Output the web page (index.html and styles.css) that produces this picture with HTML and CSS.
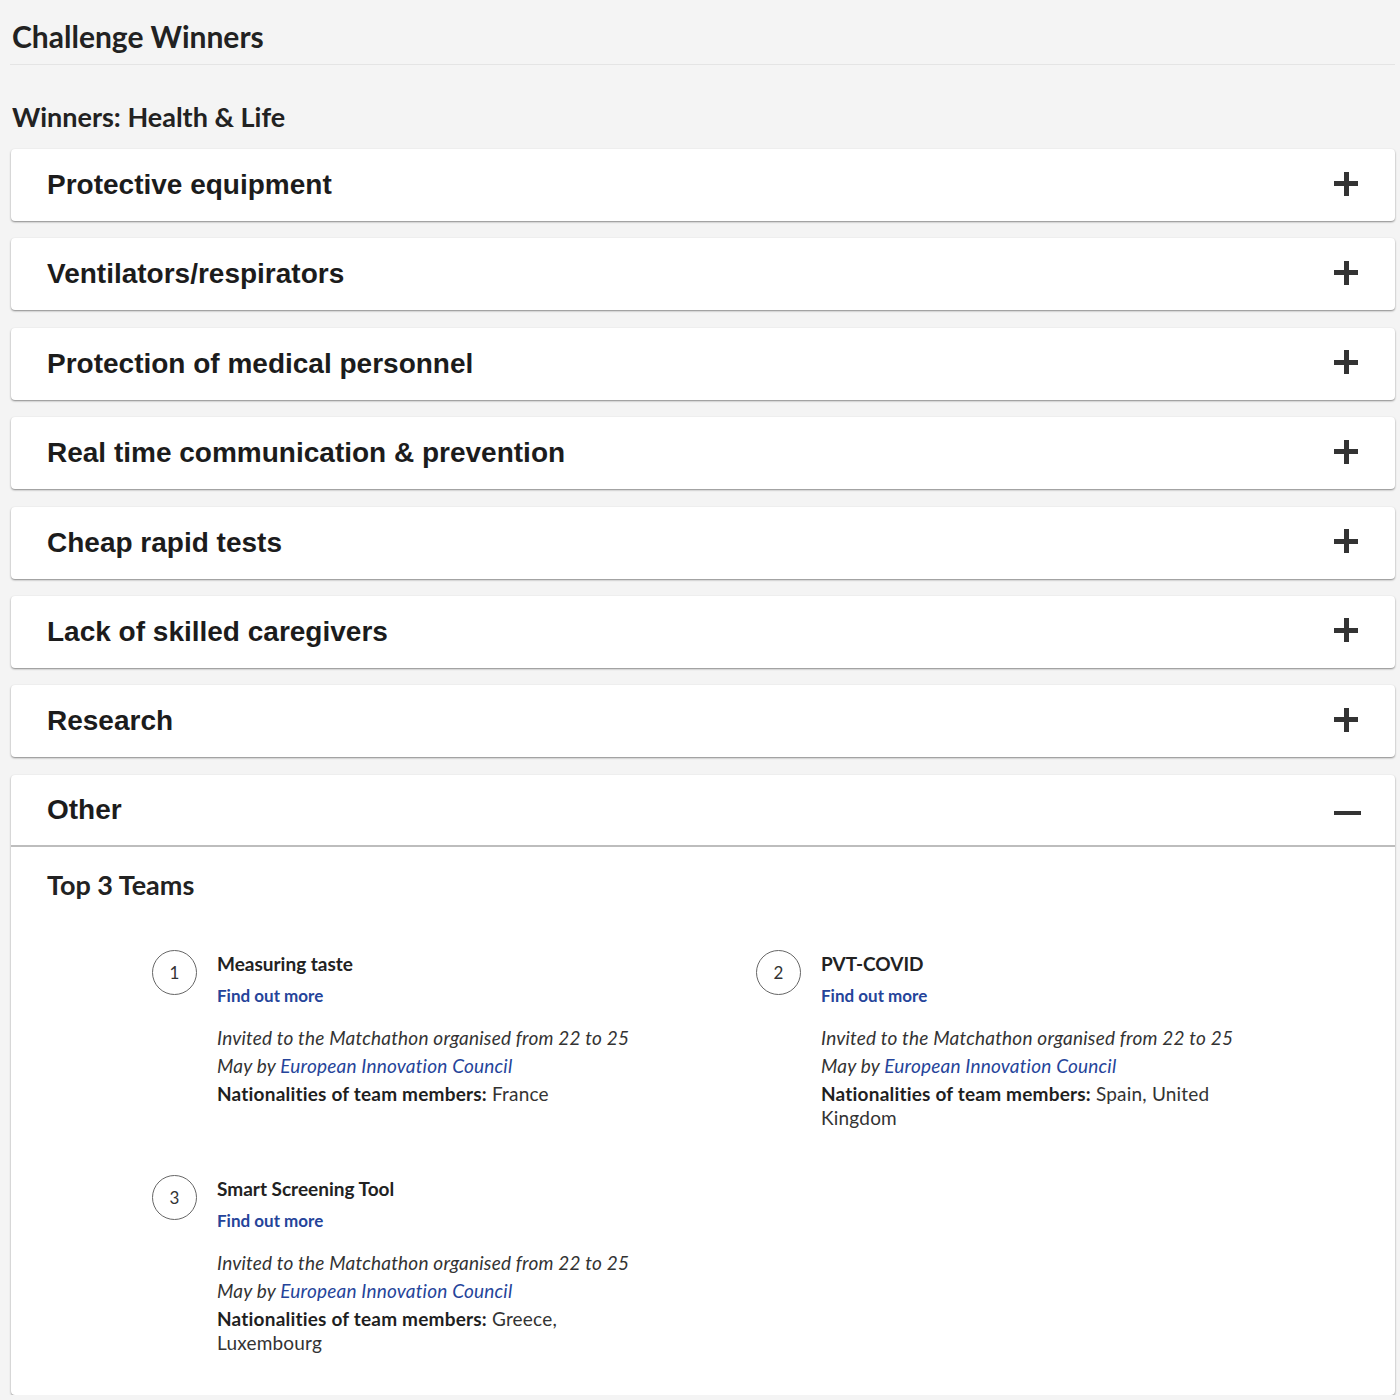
FILE: index.html
```html
<!DOCTYPE html>
<html lang="en">
<head>
<meta charset="utf-8">
<title>Challenge Winners</title>
<link rel="stylesheet" href="styles.css">
</head>
<body>
<div class="page">
  <h1 class="page-title">Challenge Winners</h1>
  <div class="rule"></div>
  <h2 class="section-title">Winners: Health &amp; Life</h2>

  <div class="accordion">
    <div class="acc-item">
      <div class="acc-head"><span class="acc-title">Protective equipment</span><span class="icon plus"></span></div>
    </div>
    <div class="acc-item">
      <div class="acc-head"><span class="acc-title">Ventilators/respirators</span><span class="icon plus"></span></div>
    </div>
    <div class="acc-item">
      <div class="acc-head"><span class="acc-title">Protection of medical personnel</span><span class="icon plus"></span></div>
    </div>
    <div class="acc-item">
      <div class="acc-head"><span class="acc-title">Real time communication &amp; prevention</span><span class="icon plus"></span></div>
    </div>
    <div class="acc-item">
      <div class="acc-head"><span class="acc-title">Cheap rapid tests</span><span class="icon plus"></span></div>
    </div>
    <div class="acc-item">
      <div class="acc-head"><span class="acc-title">Lack of skilled caregivers</span><span class="icon plus"></span></div>
    </div>
    <div class="acc-item">
      <div class="acc-head"><span class="acc-title">Research</span><span class="icon plus"></span></div>
    </div>
    <div class="acc-item open">
      <div class="acc-head"><span class="acc-title">Other</span><span class="icon minus"></span></div>
      <div class="acc-body">
        <h3 class="teams-title">Top 3 Teams</h3>
        <div class="teams">
          <div class="team">
            <div class="rank">1</div>
            <div class="team-info">
              <div class="team-name">Measuring taste</div>
              <a class="more" href="#">Find out more</a>
              <p class="invite">Invited to the Matchathon organised from 22 to 25 May by <a href="#">European Innovation Council</a></p>
              <p class="nat"><b>Nationalities of team members:</b> France</p>
            </div>
          </div>
          <div class="team">
            <div class="rank">2</div>
            <div class="team-info">
              <div class="team-name">PVT-COVID</div>
              <a class="more" href="#">Find out more</a>
              <p class="invite">Invited to the Matchathon organised from 22 to 25 May by <a href="#">European Innovation Council</a></p>
              <p class="nat"><b>Nationalities of team members:</b> Spain, United Kingdom</p>
            </div>
          </div>
          <div class="team">
            <div class="rank">3</div>
            <div class="team-info">
              <div class="team-name">Smart Screening Tool</div>
              <a class="more" href="#">Find out more</a>
              <p class="invite">Invited to the Matchathon organised from 22 to 25 May by <a href="#">European Innovation Council</a></p>
              <p class="nat"><b>Nationalities of team members:</b> Greece, Luxembourg</p>
            </div>
          </div>
        </div>
      </div>
    </div>
  </div>
</div>
</body>
</html>
```

FILE: styles.css
```css
* { box-sizing: border-box; }

body {
  margin: 0;
  background: #f4f4f4;
  color: #222;
  font-family: Lato, "Open Sans", sans-serif;
}

.page {
  padding: 0 5px 0 11px;
}

.page-title {
  margin: 0;
  padding: 18px 0 0 1px;
  font-size: 30px;
  line-height: 36px;
  font-weight: 700;
  color: #222;
}

.rule {
  margin: 10px 0 0 -1px;
  height: 1px;
  background: #e4e4e4;
}

.section-title {
  margin: 0;
  padding: 37px 0 0 1px;
  font-size: 27px;
  line-height: 30px;
  font-weight: 700;
  color: #222;
}

.accordion {
  margin-top: 17px;
  display: flex;
  flex-direction: column;
  gap: 17.4px;
}

.acc-item {
  background: #fff;
  border-radius: 4px;
  box-shadow: 0 1px 2px rgba(0, 0, 0, 0.45);
}

.acc-head {
  height: 72px;
  padding: 0 36px 0 36px;
  display: flex;
  align-items: center;
  justify-content: space-between;
}

.open .acc-head {
  border-bottom: 2px solid #bdbdbd;
}

.acc-title {
  font-family: "Liberation Sans", Arial, sans-serif;
  font-weight: 700;
  font-size: 28px;
  color: #1c1c1c;
}

.icon {
  position: relative;
  width: 24px;
  height: 24px;
  margin-right: 1px;
  margin-top: -3px;
}

.icon::before,
.icon::after {
  content: "";
  position: absolute;
  background: #333;
}

.icon::before {
  left: 0;
  top: 9.5px;
  width: 24px;
  height: 5px;
}

.plus::after {
  left: 9.5px;
  top: 0;
  width: 5px;
  height: 24px;
}

.minus {
  width: 27px;
  margin-right: -2px;
  margin-top: 0;
}

.minus::before {
  width: 27px;
  height: 4px;
  top: 13px;
}

.minus::after {
  display: none;
}

.acc-body {
  padding: 22px 36px 40px 36px;
}

.teams-title {
  margin: 0;
  font-size: 27px;
  line-height: 32px;
  font-weight: 700;
  color: #222;
}

.teams {
  margin-top: 50px;
  padding-left: 105px;
  display: grid;
  grid-template-columns: 604px 604px;
  row-gap: 46px;
}

.team {
  display: flex;
  align-items: flex-start;
}

.rank {
  flex: none;
  width: 45px;
  height: 45px;
  border: 1.5px solid #666;
  border-radius: 50%;
  display: flex;
  align-items: center;
  justify-content: center;
  font-size: 17px;
  color: #333;
  margin-top: -1px;
}

.team-info {
  margin-left: 20px;
  width: 420px;
  font-size: 19px;
  letter-spacing: 0.2px;
}

.team-name {
  font-weight: 700;
  font-size: 19px;
  letter-spacing: 0;
  line-height: 26px;
  color: #222;
}

.more {
  display: block;
  margin-top: 6px;
  font-size: 17px;
  letter-spacing: 0;
  color: #25449a;
  font-weight: 700;
  text-decoration: none;
  line-height: 26px;
}

.invite {
  margin: 15px 0 0 0;
  font-style: italic;
  line-height: 28px;
  color: #333;
}

.invite a {
  color: #25449a;
  text-decoration: none;
}

.nat {
  margin: 2px 0 0 0;
  line-height: 24px;
  color: #333;
}

.nat b {
  color: #1f1f1f;
}
```
